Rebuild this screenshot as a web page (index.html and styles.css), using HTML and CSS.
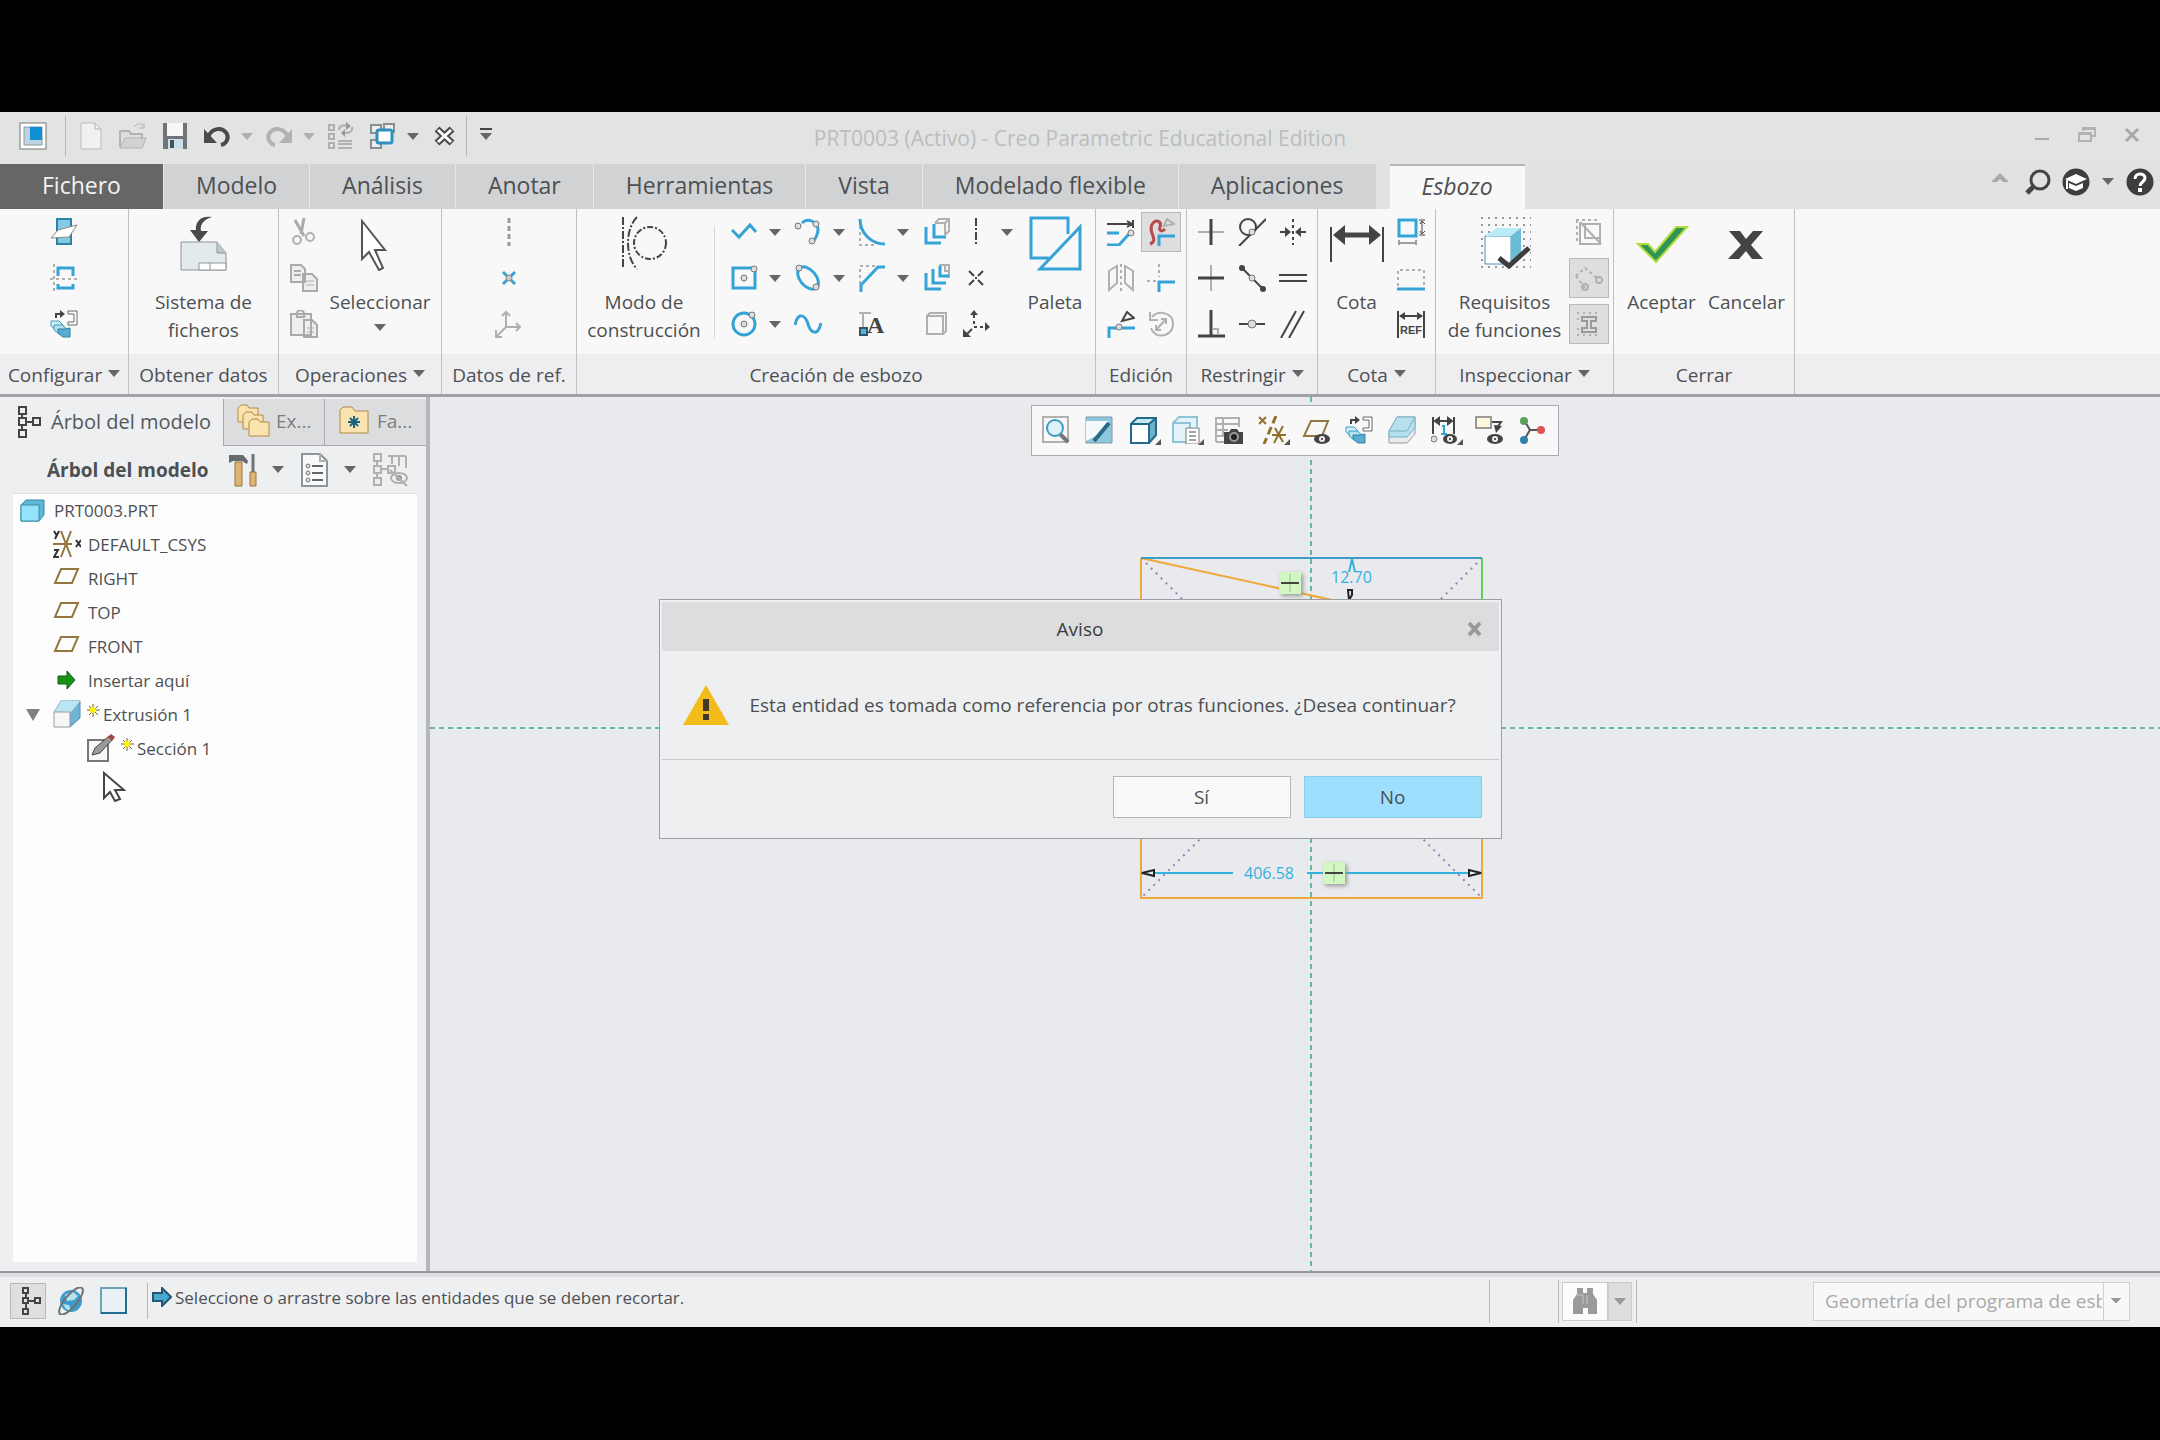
FILE: index.html
```html
<!DOCTYPE html>
<html lang="es">
<head>
    <meta charset="UTF-8">
    <meta name="viewport" content="width=device-width, initial-scale=1.0">
    <title>PRT0003 (Activo) - Creo Parametric Educational Edition</title>
    <link rel="stylesheet" href="styles.css">
</head>
<body>
    <div class="app">
        <header class="titlebar">
            <div class="quick">
                <button class="qbtn logo" aria-label="Creo"><svg viewBox="0 0 28 28"><rect x="1" y="1" width="26" height="26" fill="#fff" stroke="#777"/><path d="M5 5h18v18H5z" fill="#bcd5e0" stroke="#8a9aa2"/><path d="M11 5h12v13H11z" fill="#0f8fd4"/></svg></button>
                <span class="qsep"></span>
                <button class="qbtn" aria-label="Nuevo"><svg viewBox="0 0 28 28"><path d="M4 1h14l6 6v20H4z" fill="#f0f0f0" stroke="#bcbcbc"/><path d="M18 1v6h6" class="gray"/></svg></button>
                <button class="qbtn" aria-label="Abrir"><svg viewBox="0 0 28 28"><path d="M1 25V9h9l2 3h11v4" fill="#ddd" stroke="#b4b4b4" stroke-width="2"/><path d="M1 26l5-10h21l-4 10z" fill="#d2d2d2" stroke="#b4b4b4"/><path d="M15 5c3-4 6-4 9-1M25 1v5h-5" class="gray"/></svg></button>
                <button class="qbtn" aria-label="Guardar"><svg viewBox="0 0 28 28"><path d="M2 1h24v26H2z" fill="#707478"/><path d="M6 1h16v13H6z" fill="#f7f7f7"/><path d="M7 17h15v10H7z" fill="#c9dfe9"/><path d="M9 18h4v8H9z" fill="#45525a"/></svg></button>
                <button class="qbtn" aria-label="Deshacer"><svg viewBox="0 0 28 28"><path d="M5 15C9 6 19 4 24 12c2 5-1 10-6 11" fill="none" stroke="#4a4a4a" stroke-width="4"/><path d="M1 7v14h13z" fill="#4a4a4a"/></svg></button>
                <button class="drop off" aria-label="Lista deshacer"><i class="caret"></i></button>
                <button class="qbtn" aria-label="Rehacer"><svg viewBox="0 0 28 28"><path d="M23 15C19 6 9 4 4 12c-2 5 1 10 6 11" fill="none" stroke="#b2b2b2" stroke-width="4"/><path d="M27 7v14H14z" fill="#b2b2b2"/></svg></button>
                <button class="drop off" aria-label="Lista rehacer"><i class="caret"></i></button>
                <button class="qbtn" aria-label="Regenerar"><svg viewBox="0 0 28 28"><path d="M2 3h5v5H2zM2 12h5v5H2zM2 21h5v5H2zM11 19h14M11 22h14M11 26h14M12 8c0-5 5-5 9-4M25 5c1 5-3 6-8 6" class="gray thick"/><path d="M19 0l5 4-5 4zM18 7v8l-4-4z" fill="#999"/></svg></button>
                <button class="qbtn" aria-label="Ventanas"><svg viewBox="0 0 28 28"><path d="M2 3h10v8H2zM15 2h10v8H15zM2 18h10v8H2z" fill="#eee" stroke="#8b8f92" stroke-width="2"/><rect x="8" y="8" width="15" height="13" rx="2" fill="#fff" stroke="#2f8fbe" stroke-width="3"/></svg></button>
                <button class="drop" aria-label="Lista ventanas"><i class="caret"></i></button>
                <button class="qbtn" aria-label="Cerrar ventana"><svg viewBox="0 0 28 28"><path d="M6 7l15 14M21 7L6 21" stroke="#4a4a4a" stroke-width="7"/><path d="M7 8l13 12M20 8L7 20" stroke="#fff" stroke-width="3"/></svg></button>
                <span class="qsep last"></span>
                <button class="drop more" aria-label="Personalizar"><i class="caret"></i></button>
            </div>
            <h1>PRT0003 (Activo) - Creo Parametric Educational Edition</h1>
            <div class="winbtns">
                <button aria-label="Minimizar"><svg viewBox="0 0 20 20"><path d="M3 14h14" stroke="#aaa" stroke-width="2"/></svg></button>
                <button aria-label="Restaurar"><svg viewBox="0 0 20 20"><path d="M6 6V3h12v8h-4M6 4h12M2 8h12v8H2zM2 9h12" fill="none" stroke="#b2b2b2" stroke-width="2"/></svg></button>
                <button aria-label="Cerrar"><svg viewBox="0 0 20 20"><path d="M4 4l12 12M16 4L4 16" stroke="#a8a8a8" stroke-width="3"/></svg></button>
            </div>
        </header>

        <nav class="tabs">
            <button class="tab file">Fichero</button>
            <button class="tab">Modelo</button>
            <button class="tab">Análisis</button>
            <button class="tab">Anotar</button>
            <button class="tab">Herramientas</button>
            <button class="tab">Vista</button>
            <button class="tab">Modelado flexible</button>
            <button class="tab">Aplicaciones</button>
            <button class="tab active">Esbozo</button>
            <div class="help">
                <button aria-label="Minimizar cinta"><svg viewBox="0 0 28 28"><path d="M5 14l9-9 9 9h-6l-3-3-3 3z" fill="#aaa"/></svg></button>
                <button aria-label="Buscar"><svg viewBox="0 0 28 28"><circle cx="16" cy="12" r="9" fill="none" stroke="#444" stroke-width="3"/><path d="M9 19l-6 6" stroke="#444" stroke-width="5"/></svg></button>
                <button aria-label="Aprendizaje"><svg viewBox="0 0 28 28"><circle cx="14" cy="14" r="13.5" fill="#3d3d3d"/><path d="M3 11l11-5 11 5-11 5zM7 15l7 3 7-3v5l-7 3-7-3z" fill="#fff"/><path d="M5 12v9" stroke="#fff" stroke-width="2"/></svg></button>
                <button class="drop" aria-label="Lista aprendizaje"><i class="caret"></i></button>
                <button aria-label="Ayuda"><svg viewBox="0 0 28 28"><circle cx="14" cy="14" r="13.5" fill="#3d3d3d"/><path d="M9 11c0-7 10-6 10-1 0 4-5 4-5 8" fill="none" stroke="#fff" stroke-width="3"/><path d="M12 20h4v4h-4z" fill="#fff"/></svg></button>
            </div>
        </nav>

        <section class="ribbon">
            <div class="group g-config">
                <div class="tools">
                    <div class="grid c1">
                        <button class="tool" aria-label="Configurar esbozo"><svg viewBox="0 0 28 28"><path d="M7 1h14v25H7z" fill="#86cbe2" stroke="#2a82a6" stroke-width="2"/><path d="M1 20l7-8 19-5-8 12z" fill="#fff" stroke="#888"/></svg></button>
                        <button class="tool" aria-label="Referencias"><svg viewBox="0 0 28 28"><path d="M4 0v28M0 15h27" class="gray dash"/><path d="M8 12V4h15v8M8 20v4h15v-4" class="blue"/></svg></button>
                        <button class="tool" aria-label="Vista de esbozo"><svg viewBox="0 0 28 28"><path d="M6 8V4h6" class="dark"/><path d="M18 1h9v14h-9v-3h6V4h-6z" fill="#fff" stroke="#666"/><path d="M10 0l5 4-5 4z" fill="#444"/><path d="M1 11h8l4 4v5H6l-5-4z" fill="#d5eff9" stroke="#3a9cc4"/><path d="M4 15h8l5 4v5H9l-5-4z" fill="#b5e0f0" stroke="#3a9cc4"/><path d="M8 19h7l5-1v9h-7l-5-4z" fill="#5aabd0" stroke="#2a82a6"/></svg></button>
                    </div>
                </div>
                <button class="caption">Configurar <i class="caret"></i></button>
            </div>
            <div class="group g-data">
                <div class="tools">
                    <button class="big"><svg viewBox="0 0 56 56"><path d="M5 27h36l9 11v17H5z" fill="#e3eaec" stroke="#8f9598"/><path d="M41 27v11h9" fill="#b9c9cc" stroke="#8f9598"/><path d="M23 48h27v7H23zM34 48v7" fill="#fff" stroke="#8f9598"/><path d="M36 2C26 5 24 11 25 16h7l-9 11-9-12h6C19 7 25 0 36 2z" fill="#4a4a4a"/></svg><span>Sistema de ficheros</span></button>
                </div>
                <div class="caption">Obtener datos</div>
            </div>
            <div class="group g-ops">
                <div class="tools">
                    <div class="grid c1">
                        <button class="tool" aria-label="Cortar"><svg viewBox="0 0 28 28"><path d="M5 2l9 16M14 0l-3 16" stroke="#aaa" stroke-width="3"/><circle cx="7" cy="22" r="4" class="gray thick"/><circle cx="20" cy="19" r="4" class="gray thick"/></svg></button>
                        <button class="tool" aria-label="Copiar"><svg viewBox="0 0 28 28"><path d="M1 1h10l4 4v13H1zM4 7h7M4 11h7M13 10h9l5 5v12H13z" fill="#eee" stroke="#aaa" stroke-width="2"/><path d="M16 17h8M16 21h8" class="gray"/></svg></button>
                        <button class="tool" aria-label="Pegar"><svg viewBox="0 0 28 28"><path d="M1 4h20v21H1zM7 4c0-5 7-5 7 0v3H7zM14 10h8l5 5v12H14z" fill="#eee" stroke="#aaa" stroke-width="2"/><path d="M17 18h7M17 22h7" class="gray"/></svg></button>
                    </div>
                    <button class="big"><svg viewBox="0 0 56 56"><path d="M10 6v38l7-7 10 18 4-2-8-18h10z" fill="#fff" stroke="#555" stroke-width="2"/></svg><span>Seleccionar</span><i class="caret"></i></button>
                </div>
                <button class="caption">Operaciones <i class="caret"></i></button>
            </div>
            <div class="group g-ref">
                <div class="tools">
                    <div class="grid c1">
                        <button class="tool" aria-label="Línea de centros"><svg viewBox="0 0 28 28"><path d="M14 0v28" stroke="#999" stroke-width="3" stroke-dasharray="5 3"/></svg></button>
                        <button class="tool" aria-label="Punto"><svg viewBox="0 0 28 28"><path d="M8 8l12 12M20 8L8 20" class="blue"/><circle cx="14" cy="14" r="3" fill="#ccc" stroke="#888"/></svg></button>
                        <button class="tool" aria-label="Sistema de coordenadas"><svg viewBox="0 0 28 28"><path d="M11 2v15h14M11 17l-9 9M7 6l4-4 4 4M21 13l4 4-4 4M1 20v7h6" class="gray thick"/></svg></button>
                    </div>
                </div>
                <div class="caption">Datos de ref.</div>
            </div>
            <div class="group g-sketch">
                <div class="tools">
                    <button class="big wide"><svg viewBox="0 0 56 56"><path d="M7 2v52M21 2C9 14 9 42 21 54" stroke="#444" stroke-width="2" fill="none" stroke-dasharray="8 2 2 2"/><circle cx="34" cy="28" r="16" stroke="#444" stroke-width="2" fill="none" stroke-dasharray="6 2 2 2"/></svg><span>Modo de construcción</span></button>
                    <span class="vline"></span>
                    <div class="grid sketch">
                        <div class="split"><button class="tool" aria-label="Línea"><svg viewBox="0 0 28 28"><path d="M2 12l7 7L20 7l6 7" class="blue"/></svg></button><button class="drop" aria-label="Más líneas"><i class="caret"></i></button></div>
                        <div class="split"><button class="tool" aria-label="Arco"><svg viewBox="0 0 28 28"><path d="M8 5C14-1 24 4 24 12c0 4-3 9-5 12" class="blue"/><circle cx="4" cy="8" r="3" class="dot"/><circle cx="22" cy="6" r="3" class="dot"/><circle cx="18" cy="23" r="3" class="dot"/></svg></button><button class="drop" aria-label="Más arcos"><i class="caret"></i></button></div>
                        <div class="split"><button class="tool" aria-label="Empalme"><svg viewBox="0 0 28 28"><path d="M2 8v19h14" class="gray dash"/><path d="M2 1c0 14 11 25 25 25" class="blue"/></svg></button><button class="drop" aria-label="Más empalmes"><i class="caret"></i></button></div>
                        <button class="tool" aria-label="Desfase"><svg viewBox="0 0 28 28"><path d="M13 5l4-4h10v12l-4 4M13 5h10v12M23 5l4-4" class="gray thick"/><path d="M12 6v13h12M4 9v16h15" class="blue"/></svg></button>
                        <div class="split"><button class="tool" aria-label="Línea de eje"><svg viewBox="0 0 28 28"><path d="M14 0v28" stroke="#444" stroke-width="2" stroke-dasharray="8 2 2 2"/></svg></button><button class="drop" aria-label="Más líneas de eje"><i class="caret"></i></button></div>

                        <div class="split"><button class="tool" aria-label="Rectángulo"><svg viewBox="0 0 28 28"><path d="M3 4h22v20H3z" class="blue"/><circle cx="14" cy="14" r="3" class="dot"/><circle cx="24" cy="5" r="3" class="dot"/></svg></button><button class="drop" aria-label="Más rectángulos"><i class="caret"></i></button></div>
                        <div class="split"><button class="tool" aria-label="Elipse"><svg viewBox="0 0 28 28"><ellipse cx="14" cy="14" rx="13" ry="8" transform="rotate(50 14 14)" class="blue"/><circle cx="5" cy="4" r="3" class="dot"/><circle cx="22" cy="23" r="3" class="dot"/></svg></button><button class="drop" aria-label="Más elipses"><i class="caret"></i></button></div>
                        <div class="split"><button class="tool" aria-label="Chaflán"><svg viewBox="0 0 28 28"><path d="M2 20V2h16" class="gray dash"/><path d="M3 28v-7L20 3h7" class="blue"/></svg></button><button class="drop" aria-label="Más chaflanes"><i class="caret"></i></button></div>
                        <button class="tool" aria-label="Engrosar"><svg viewBox="0 0 28 28"><path d="M17 1h10v13M23 1v6h4" class="gray thick"/><path d="M11 5v14h13M4 9v16h15M18 2v10h9" class="blue"/></svg></button>
                        <button class="tool" aria-label="Punto de esbozo"><svg viewBox="0 0 28 28"><path d="M7 7l5 5M16 16l5 5M21 7l-5 5M12 16l-5 5M13 14h2" class="dark"/></svg></button>

                        <div class="split"><button class="tool" aria-label="Círculo"><svg viewBox="0 0 28 28"><circle cx="14" cy="14" r="11" class="blue"/><circle cx="14" cy="14" r="3" class="dot"/><circle cx="22" cy="5" r="3" class="dot"/></svg></button><button class="drop" aria-label="Más círculos"><i class="caret"></i></button></div>
                        <button class="tool" aria-label="Spline"><svg viewBox="0 0 28 28"><path d="M1 15C4 2 11 4 14 14s10 12 13-1" class="blue"/></svg></button>
                        <button class="tool" aria-label="Texto"><svg viewBox="0 0 28 28"><path d="M5 24V4M1 3h12" class="gray thick"/><text x="9" y="23" class="glyph">A</text><path d="M2 18h7v7H2z" fill="#52b4da" stroke="#31586a" stroke-width="2"/></svg></button>
                        <button class="tool" aria-label="Proyectar"><svg viewBox="0 0 28 28"><path d="M5 6h16v18H5zM5 6l3-3h16v18l-3 3" class="gray thick"/></svg></button>
                        <button class="tool" aria-label="Sistema de coordenadas de esbozo"><svg viewBox="0 0 28 28"><path d="M12 5v12h12" class="dark dash"/><path d="M10 19l-6 6" class="dark"/><path d="M8 5l4-5 4 5zM23 12l5 5-5 4zM1 19v8h8z" fill="#444"/></svg></button>
                    </div>
                    <button class="big"><svg viewBox="0 0 56 56"><path d="M22 43H4V3h37v16M53 12v42H13z" fill="none" stroke="#35a3d6" stroke-width="3"/></svg><span>Paleta</span></button>
                </div>
                <div class="caption">Creación de esbozo</div>
            </div>
            <div class="group g-edit">
                <div class="tools">
                    <div class="grid c2">
                        <button class="tool" aria-label="Modificar"><svg viewBox="0 0 28 28"><path d="M0 6h26M26 2v8M20 3l5 3-5 3" class="dark"/><path d="M0 15h12M0 27h12l10-11" class="blue"/><circle cx="24" cy="15" r="3" class="dot"/></svg></button>
                        <button class="tool on" aria-label="Suprimir segmento"><svg viewBox="0 0 28 28"><path d="M3 26c10-4-4-13 3-21 4-4 9-1 7 4-1 3 1 6 5 2" fill="none" stroke="#b8494c" stroke-width="3"/><path d="M12 28v-10h16" class="blue"/><path d="M17 8l3-7 7 5z" class="gray thick"/></svg></button>
                        <button class="tool" aria-label="Simetría"><svg viewBox="0 0 28 28"><path d="M2 7l8-5v17l-8 7zM26 7l-8-5v17l8 7z" class="gray thick"/><path d="M14 0v28" class="gray dash"/></svg></button>
                        <button class="tool" aria-label="Esquina"><svg viewBox="0 0 28 28"><path d="M12 0v13M0 17h10" class="gray dash"/><path d="M12 28V18h16" class="blue"/></svg></button>
                        <button class="tool" aria-label="Dividir"><svg viewBox="0 0 28 28"><path d="M2 28V18h26" class="blue"/><circle cx="12" cy="17" r="3" class="dot"/><path d="M15 11L20 2l7 6z" class="dark"/></svg></button>
                        <button class="tool" aria-label="Girar"><svg viewBox="0 0 28 28"><path d="M5 7c6-7 21-5 21 7 0 13-18 16-22 4M3 2v8h8M9 20L19 9M9 15v5h5M14 9h5v5" class="gray thick"/></svg></button>
                    </div>
                </div>
                <div class="caption">Edición</div>
            </div>
            <div class="group g-cons">
                <div class="tools">
                    <div class="grid c3">
                        <button class="tool" aria-label="Vertical"><svg viewBox="0 0 28 28"><path d="M1 14h26" class="gray thick"/><path d="M14 1v26" class="dark bold"/></svg></button>
                        <button class="tool" aria-label="Tangente"><svg viewBox="0 0 28 28"><circle cx="10" cy="9" r="8" class="dark"/><path d="M1 28L28 1" class="dark"/><circle cx="14" cy="14" r="3" class="dot"/></svg></button>
                        <button class="tool" aria-label="Simétrico"><svg viewBox="0 0 28 28"><path d="M14 1v26" class="dark dash"/><path d="M1 14h9M27 14h-9" class="dark"/><path d="M6 9l6 5-6 5zM22 9l-6 5 6 5z" fill="#444"/></svg></button>
                        <button class="tool" aria-label="Horizontal"><svg viewBox="0 0 28 28"><path d="M14 1v26" class="gray thick"/><path d="M1 14h26" class="dark bold"/></svg></button>
                        <button class="tool" aria-label="Punto medio"><svg viewBox="0 0 28 28"><path d="M4 4l20 20" class="dark"/><circle cx="4" cy="4" r="3" fill="#444"/><circle cx="25" cy="25" r="3" fill="#444"/><circle cx="14" cy="14" r="3" class="dot"/></svg></button>
                        <button class="tool" aria-label="Igual"><svg viewBox="0 0 28 28"><path d="M0 11h28M0 17h28" class="dark"/></svg></button>
                        <button class="tool" aria-label="Perpendicular"><svg viewBox="0 0 28 28"><path d="M14 0v26M1 26h27" class="dark bold"/><path d="M15 19h6v6" class="gray thick"/></svg></button>
                        <button class="tool" aria-label="Coincidente"><svg viewBox="0 0 28 28"><path d="M1 14h26" class="dark"/><circle cx="14" cy="14" r="4" class="dot"/></svg></button>
                        <button class="tool" aria-label="Paralelo"><svg viewBox="0 0 28 28"><path d="M2 28L17 1M10 28L25 1" class="dark"/></svg></button>
                    </div>
                </div>
                <button class="caption">Restringir <i class="caret"></i></button>
            </div>
            <div class="group g-dim">
                <div class="tools">
                    <button class="big"><svg viewBox="0 0 56 56"><path d="M2 12v35M54 12v35" stroke="#444" stroke-width="2"/><path d="M10 20h36" stroke="#444" stroke-width="5"/><path d="M4 20l12-10v20zM52 20L40 10v20z" fill="#444"/></svg><span>Cota</span></button>
                    <div class="grid c1">
                        <button class="tool" aria-label="Perímetro"><svg viewBox="0 0 28 28"><path d="M2 2h17v16H2z" class="blue"/><path d="M22 2h6M25 3v13M22 17h6M2 22v5M3 25h15M19 22v5M23 6l2-3 3 3M23 13l2 3 3-3" class="dark thin"/></svg></button>
                        <button class="tool" aria-label="Línea base"><svg viewBox="0 0 28 28"><path d="M1 22V6h26v16" class="gray dash"/><path d="M0 25h28" class="blue"/></svg></button>
                        <button class="tool" aria-label="Referencia"><svg viewBox="0 0 28 28"><path d="M1 1v27M27 1v27M3 6h22" class="dark"/><path d="M2 6l6-4v8zM26 6l-6-4v8z" fill="#444"/><text x="3" y="24" class="ref">REF</text></svg></button>
                    </div>
                </div>
                <button class="caption">Cota <i class="caret"></i></button>
            </div>
            <div class="group g-insp">
                <div class="tools">
                    <button class="big"><svg viewBox="0 0 56 56"><path d="M4 3h50M4 10h50M4 17h50M4 24h50M4 31h50M4 38h50M4 45h50M4 52h50" stroke="#999" stroke-width="2" stroke-dasharray="2 5"/><path d="M8 21h26v28H8z" fill="#fff" stroke="#4a93ad"/><path d="M8 21l12-8h24l-10 8z" fill="#b8ecf6"/><path d="M34 21l10-8v24L34 49z" fill="#6abbd6"/><path d="M22 43l10 8 20-18" fill="none" stroke="#3d3d3d" stroke-width="5"/></svg><span>Requisitos de&nbsp;funciones</span></button>
                    <div class="grid c1">
                        <button class="tool" aria-label="Geometría solapada"><svg viewBox="0 0 28 28"><path d="M1 2h24M2 2v24" class="gray dash"/><path d="M5 6h20v20H5zM10 6v14h15M5 4l21 22" class="gray thick"/></svg></button>
                        <button class="tool on" aria-label="Extremos abiertos"><svg viewBox="0 0 28 28"><path d="M1 12L10 4l12 10M1 12l9 12" class="gray dash"/><circle cx="10" cy="23" r="3" class="gray thick"/><circle cx="24" cy="16" r="3" class="gray thick"/></svg></button>
                        <button class="tool on" aria-label="Bucles cerrados"><svg viewBox="0 0 28 28"><path d="M2 3h24M2 25h24M2 9h24M2 19h24" class="gray dots"/><path d="M7 7h14v4h-5v7h5v4H7v-4h5v-7H7z" fill="#dcdee0" stroke="#999" stroke-width="2"/></svg></button>
                    </div>
                </div>
                <button class="caption">Inspeccionar <i class="caret"></i></button>
            </div>
            <div class="group g-close">
                <div class="tools">
                    <button class="big"><svg viewBox="0 0 56 56"><path d="M4 29h10l7 8 21-25h11L22 47z" fill="#2f9455" stroke="#b3dc3c" stroke-width="2"/></svg><span>Aceptar</span></button>
                    <button class="big"><svg viewBox="0 0 56 56"><path d="M10 16h11l6 8 7-8h10L32 30l12 14H33l-6-8-7 8H9l13-14z" fill="#444"/></svg><span>Cancelar</span></button>
                </div>
                <div class="caption">Cerrar</div>
            </div>
            <div class="group rest"><div class="tools"></div><div class="caption"></div></div>
        </section>

        <main class="work">
            <aside class="side">
                <div class="side-tabs">
                    <button class="side-tab current"><svg viewBox="0 0 28 34"><path d="M3 2h7v7H3zM3 13h7v7H3zM3 25h7v7H3zM17 13h7v7h-7zM6 9v4M6 20v5M10 17h7" class="dark"/></svg>Árbol del modelo</button>
                    <button class="side-tab"><svg viewBox="0 0 34 34"><g fill="#fbe3b0" stroke="#b08a45"><path d="M2 18V4l3-3h6l2 3h9v14z"/><path d="M7 25V11l3-3h6l2 3h9v14z"/><path d="M13 32V18l3-3h6l2 3h9v14z"/></g></svg>Ex...</button>
                    <button class="side-tab"><svg viewBox="0 0 34 34"><path d="M3 29V6l3-3h9l3 4h13v22z" fill="#fbe3b0" stroke="#b08a45"/><path d="M17 12v12M11 18h12M13 14l8 8M21 14l-8 8" stroke="#19617e" stroke-width="2"/></svg>Fa...</button>
                </div>
                <div class="side-head">
                    <h2>Árbol del modelo</h2>
                    <button class="hbtn" aria-label="Configuración"><svg viewBox="0 0 30 34"><path d="M1 2h14l5 6-1 3-5-3H5l-4 2z" fill="#666b70"/><path d="M7 9h7v24H7z" fill="#dcb573" stroke="#9b743c"/><path d="M25 1v18" stroke="#6c747c" stroke-width="3"/><path d="M22 19h6v14h-6z" fill="#dcb573" stroke="#9b743c"/></svg></button>
                    <button class="drop" aria-label="Más configuración"><i class="caret"></i></button>
                    <button class="hbtn" aria-label="Mostrar"><svg viewBox="0 0 30 34"><path d="M2 1h18l7 7v25H2z" fill="#f7f9fa" stroke="#8d9599" stroke-width="2"/><path d="M20 1v7h7" class="gray thick"/><path d="M12 13h11M12 20h11M12 27h11" stroke="#666" stroke-width="2"/><circle cx="8" cy="13" r="2" class="dot"/><circle cx="8" cy="20" r="2" class="dot"/><circle cx="8" cy="27" r="2" class="dot"/></svg></button>
                    <button class="drop" aria-label="Más opciones"><i class="caret"></i></button>
                    <button class="hbtn hide" aria-label="Ocultar"><svg viewBox="0 0 36 34"><path d="M2 1h7v7H2zM2 13h7v7H2zM2 25h7v7H2zM16 13h7v7h-7zM5 8v5M5 20v5M9 16h7M16 3h18M20 3v8M27 3v10M34 3v12" class="gray thick"/><ellipse cx="27" cy="25" rx="8" ry="5" class="gray thick"/><circle cx="27" cy="25" r="3" fill="#999"/><path d="M18 17l17 16" class="gray thick"/></svg></button>
                </div>
                <ul class="tree">
                    <li class="root"><svg viewBox="0 0 28 28"><path d="M2 9l5-5h18v15l-5 6H2z" fill="#5fb6d8" stroke="#3189ab"/><path d="M2 9h18v16H2z" fill="#93e3fb" stroke="#3b8aab"/></svg>PRT0003.PRT</li>
                    <li><svg viewBox="0 0 28 28"><path d="M8 1l10 26M18 1L8 27M0 14h19" stroke="#93753c" stroke-width="2"/><path d="M1 1l3 5M6 1L2 9M23 10l5 7M28 10l-5 7M1 20h4l-4 7h5" fill="none" stroke="#333" stroke-width="2"/></svg>DEFAULT_CSYS</li>
                    <li><svg viewBox="0 0 28 28"><path d="M8 5h17l-6 14H2z" class="plane"/></svg>RIGHT</li>
                    <li><svg viewBox="0 0 28 28"><path d="M8 5h17l-6 14H2z" class="plane"/></svg>TOP</li>
                    <li><svg viewBox="0 0 28 28"><path d="M8 5h17l-6 14H2z" class="plane"/></svg>FRONT</li>
                    <li><svg viewBox="0 0 28 28"><path d="M5 10h9V5l8 9-8 9v-5H5z" fill="#169316" stroke="#0c5e0c"/></svg>Insertar aquí</li>
                    <li class="parent"><button class="twist" aria-label="Contraer"><i class="caret"></i></button><svg viewBox="0 0 28 28"><path d="M1 12L8 1h19v17l-10 9z" fill="#6fb4d2" stroke="#4d90ae"/><path d="M8 1h19l-9 11H1z" fill="#bce5f3"/><path d="M1 12h16v15H1z" fill="#f6f6f6" stroke="#999"/></svg><svg class="star" viewBox="0 0 13 13"><path d="M6 0v13M0 6h13M2 2l9 9M11 2l-9 9" stroke="#6f6410"/><circle cx="6" cy="6" r="3" fill="#fdf200"/></svg>Extrusión 1</li>
                    <li class="child"><svg viewBox="0 0 28 28"><path d="M1 6h20v21H1z" fill="#f8f8f8" stroke="#777" stroke-width="2"/><path d="M5 21l3-7L22 2l4 3-13 14z" fill="#9b9b9b" stroke="#444"/><path d="M21 3l3-3 4 3-3 4z" fill="#a54444"/></svg><svg class="star" viewBox="0 0 13 13"><path d="M6 0v13M0 6h13M2 2l9 9M11 2l-9 9" stroke="#6f6410"/><circle cx="6" cy="6" r="3" fill="#fdf200"/></svg>Sección 1</li>
                </ul>
            </aside>

            <section class="canvas">
                <svg class="drawing" viewBox="0 0 1730 874">
                    <path d="M881 0v874M0 331h1730" stroke="#62b8a4" stroke-width="2" stroke-dasharray="5 4" fill="none"/>
                    <path d="M711 161l341 340M1052 161L711 501" stroke="#9a7fb8" stroke-width="2" stroke-dasharray="2 5"/>
                    <path d="M711 161v340h341V300M711 161l341 75" stroke="#efa93a" stroke-width="2" fill="none"/>
                    <path d="M1052 161v139" stroke="#62cf52" stroke-width="2"/>
                    <path d="M711 161h341" stroke="#3f9cc4" stroke-width="2"/>
                    <path d="M711 476h92M877 476h175M922 162l-3 13M922 162l3 13" stroke="#35b1dd" stroke-width="2"/>
                    <path d="M712 476l12-3v6zM1051 476l-12-3v6zM918 193h4v5l-3 5z" fill="#eee" stroke="#222" stroke-width="2"/>
                    <text x="901" y="186" class="dimtext">12.70</text>
                    <text x="814" y="482" class="dimtext">406.58</text>
                    <g class="mark">
                        <rect x="849" y="175" width="22" height="22"/>
                        <rect x="893" y="465" width="22" height="22"/>
                    </g>
                    <path d="M860 177v18M904 467v18" stroke="#8fc28a"/>
                    <path d="M851 186h18M895 476h18" stroke="#444" stroke-width="2"/>
                </svg>
                <div class="viewbar">
                    <button aria-label="Reajustar"><svg viewBox="0 0 28 28"><path d="M1 1h25v25H1z" class="gray thick"/><path d="M18 18l8 8" stroke="#777" stroke-width="4"/><circle cx="13" cy="12" r="8" fill="#dff2fa" stroke="#3f9cc4" stroke-width="2"/></svg></button>
                    <button aria-label="Repintar"><svg viewBox="0 0 28 28"><path d="M1 1h26v26H1z" fill="#8fc7dd" stroke="#7e9aa5"/><path d="M1 5h23L13 19 1 25z" fill="#f4fafc"/><path d="M24 7L9 25" stroke="#276b88" stroke-width="4"/></svg></button>
                    <button class="fly" aria-label="Estilo de visualización"><svg viewBox="0 0 28 28"><path d="M20 8l7-6v17l-7 8z" fill="#6fb0ca"/><path d="M2 8l6-6h19l-7 6z" fill="#c6e8f3"/><path d="M2 8h18v19H2zM2 8l6-6h19v17l-7 8M20 8l7-6" fill="none" stroke="#23698a" stroke-width="2"/><path d="M3 9h16v17H3z" fill="#fff"/></svg></button>
                    <button class="fly" aria-label="Orientaciones"><svg viewBox="0 0 28 28"><path d="M1 7l6-6h18v10M1 7h17v19H1z" fill="#e2f4fa" stroke="#8fc3d6" stroke-width="2"/><path d="M14 12h13v16H14z" fill="#fff" stroke="#777"/><path d="M17 16h7M17 20h7M17 24h7" class="dark thin"/></svg></button>
                    <button aria-label="Gestor de vistas"><svg viewBox="0 0 28 28"><path d="M1 2h23M1 8h23M1 14h12M1 20h8M1 26h8M1 1v25M8 2v18M24 1v10" class="gray thick"/><path d="M9 16h5l2-3h6l2 3h4v12H9z" fill="#444"/><circle cx="19" cy="21" r="4" fill="#222" stroke="#999" stroke-width="2"/></svg></button>
                    <button class="fly" aria-label="Filtros de referencia"><svg viewBox="0 0 28 28"><path d="M1 1l7 7M8 1L1 8M14 19h14M17 12l8 14M25 10l-9 17" stroke="#93712d" stroke-width="2"/><path d="M18 0L6 28" stroke="#93712d" stroke-width="3" stroke-dasharray="8 4"/></svg></button>
                    <button aria-label="Mostrar planos"><svg viewBox="0 0 28 28"><path d="M9 5h17l-6 15H2z" class="plane"/><ellipse cx="20" cy="23" rx="8" ry="5" fill="#444"/><circle cx="20" cy="23" r="3" fill="#eee"/><circle cx="20" cy="23" r="1" fill="#222"/></svg></button>
                    <button aria-label="Vista de esbozo"><svg viewBox="0 0 28 28"><path d="M6 8V4h6" class="dark"/><path d="M18 1h9v14h-9v-3h6V4h-6z" fill="#fff" stroke="#666"/><path d="M10 0l5 4-5 4z" fill="#444"/><path d="M1 11h8l4 4v5H6l-5-4z" fill="#d5eff9" stroke="#3a9cc4"/><path d="M4 15h8l5 4v5H9l-5-4z" fill="#b5e0f0" stroke="#3a9cc4"/><path d="M8 19h7l5-1v9h-7l-5-4z" fill="#5aabd0" stroke="#2a82a6"/></svg></button>
                    <button aria-label="Recortar modelo"><svg viewBox="0 0 28 28"><path d="M1 15L9 1h18v17l-8 9H1z" fill="#e8eced" stroke="#999"/><path d="M1 15L9 1h18v11l-8 9H1z" fill="#b5e0ec" stroke="#76b3c7"/><path d="M1 15h18l8-14" stroke="#76b3c7"/></svg></button>
                    <button class="fly" aria-label="Mostrar cotas"><svg viewBox="0 0 28 28"><path d="M2 1v17M23 1v17M4 5h17M4 5l4-3v6zM21 5l-4-3v6z" class="dark"/><path d="M11 10h2v8M10 18h6" stroke="#35a3d6" stroke-width="2"/><circle cx="3" cy="23" r="3" class="dot"/><ellipse cx="19" cy="23" rx="7" ry="5" fill="#444"/><circle cx="19" cy="23" r="3" fill="#eee"/><circle cx="19" cy="23" r="1" fill="#222"/></svg></button>
                    <button aria-label="Anotaciones"><svg viewBox="0 0 28 28"><path d="M1 1h15v11H1z" fill="#fdf8dc" stroke="#999" stroke-width="2"/><path d="M17 6h9l-4 6" class="dark"/><path d="M19 9l8 1-6 7z" fill="#444"/><ellipse cx="20" cy="23" rx="8" ry="5" fill="#444"/><circle cx="20" cy="23" r="3" fill="#eee"/><circle cx="20" cy="23" r="1" fill="#222"/></svg></button>
                    <button aria-label="Centro de giro"><svg viewBox="0 0 28 28"><path d="M6 4l6 10h12M12 14L6 24" stroke="#555" stroke-width="2"/><circle cx="6" cy="5" r="4" fill="#5c9f58"/><circle cx="23" cy="14" r="4" fill="#df5557"/><circle cx="6" cy="24" r="4" fill="#3580ab"/></svg></button>
                </div>
            </section>
        </main>

        <footer class="status">
            <button class="sbtn on" aria-label="Árbol"><svg viewBox="0 0 28 28"><path d="M9 1h5v5H9zM9 11h5v5H9zM9 22h5v5H9zM21 11h5v5h-5zM12 6v5M12 16v6M14 14h7" class="dark"/></svg></button>
            <button class="sbtn" aria-label="Explorador"><svg viewBox="0 0 28 28"><circle cx="14" cy="14" r="11" fill="#3c9dcc"/><path d="M8 8l7-4 6 5-4 4-7 1zM6 17l6 1 2 6-5-2z" fill="#b9e2f1"/><ellipse cx="14" cy="14" rx="17" ry="6" transform="rotate(-50 14 14)" fill="none" stroke="#6d7275" stroke-width="2"/></svg></button>
            <button class="sbtn" aria-label="Pantalla completa"><svg viewBox="0 0 28 28"><path d="M1 1h25v25H1z" fill="#eaf1f4" stroke="#6fa3b8" stroke-width="2"/><path d="M1 26h25V1" stroke="#236c8d" stroke-width="2"/></svg></button>
            <p class="message"><svg viewBox="0 0 20 20"><path d="M1 6h9V1l9 9-9 9v-5H1z" fill="#49a9d3" stroke="#24576f" stroke-width="2"/></svg>Seleccione o arrastre sobre las entidades que se deben recortar.</p>
            <div class="find">
                <button aria-label="Buscar"><svg viewBox="0 0 28 28"><path d="M6 1h6v5h4V1h6v6l4 6v14h-9v-6h-5v6H2V13l4-6z" fill="#9a9a9a"/><path d="M6 8h6v9M16 8v9" stroke="#c4c4c4"/></svg></button>
                <button class="find-more" aria-label="Más filtros"><i class="caret"></i></button>
            </div>
            <select class="filter" aria-label="Filtro de selección" disabled>
                <option>Geometría del programa de esbozo</option>
            </select>
        </footer>
    </div>

    <div class="overlay">
        <div class="dialog" role="dialog" aria-labelledby="dlg-title">
            <div class="dlg-head">
                <h2 id="dlg-title">Aviso</h2>
                <button class="dlg-close" aria-label="Cerrar"><svg viewBox="0 0 16 16"><path d="M2 2l11 12M13 2L2 14" stroke="#999" stroke-width="4"/></svg></button>
            </div>
            <div class="dlg-body">
                <svg viewBox="0 0 46 42"><path d="M23 1l23 40H0z" fill="#f3bc1b"/><path d="M20 15h6v12h-6zM20 30h6v6h-6z" fill="#43392a"/></svg>
                <p>Esta entidad es tomada como referencia por otras funciones. ¿Desea continuar?</p>
            </div>
            <div class="dlg-foot">
                <button>Sí</button>
                <button class="primary">No</button>
            </div>
        </div>
    </div>

    <svg class="cursor" viewBox="0 0 24 32"><path d="M2 2v25l6-6 5 9 5-2-5-9h9z" fill="#fff" stroke="#444" stroke-width="2"/></svg>
</body>
</html>
```
FILE: styles.css
```css
* {
    box-sizing: border-box;
}
body {
    margin: 0;
    padding: 112px 0 113px;
    height: 100vh;
    background-color: #000;
    color: #4d5053;
    font-family: "Open Sans", "Noto Sans", sans-serif;
    font-size: 19px;
}
button {
    margin: 0;
    padding: 0;
    border: 0;
    background: none;
    color: inherit;
    font: inherit;
}
h1, h2, p, ul {
    margin: 0;
    padding: 0;
}
svg {
    display: block;
    flex: none;
    fill: none;
}
.app {
    display: flex;
    flex-direction: column;
    height: 100%;
    background-color: #edeff1;
}

/* icon strokes */
.blue { fill: none; stroke: #35a3d6; stroke-width: 3; }
.dark { fill: none; stroke: #444; stroke-width: 2; }
.gray { fill: none; stroke: #b0b0b0; stroke-width: 1; }
.thick { stroke-width: 2; }
.bold { stroke-width: 3; }
.thin { stroke-width: 1; }
.dash { stroke-dasharray: 3 3; stroke-width: 2; }
.dots { stroke-dasharray: 2 4; stroke-width: 2; }
.dot { fill: #ddd; stroke: #777; }
.plane { fill: none; stroke: #94763f; stroke-width: 2; }
.glyph { fill: #444; font: bold 24px "Liberation Serif", serif; }
.ref { fill: #444; font: bold 11px "Liberation Sans", sans-serif; }

.caret {
    display: inline-block;
    border: 6px solid transparent;
    border-top: 7px solid #666;
    border-bottom: 0;
}
.drop {
    display: flex;
    align-items: center;
    justify-content: center;
    width: 22px;
}
.off .caret {
    border-top-color: #b0b0b0;
}

/* title bar */
.titlebar {
    display: grid;
    grid-template-columns: 1fr auto 1fr;
    height: 52px;
    background-color: #e2e3e3;
}
.titlebar h1 {
    font-size: 21px;
    font-weight: normal;
    line-height: 52px;
    color: #bbbdbe;
}
.quick {
    display: flex;
    align-items: center;
    padding: 0 0 4px 19px;
}
.qbtn {
    margin: 0 7px;
}
.qbtn.logo {
    margin: 0;
}
.qbtn svg {
    width: 28px;
    height: 28px;
}
.qbtn + .drop {
    margin-left: -2px;
}
.qsep {
    width: 1px;
    height: 40px;
    margin: 0 4px 0 18px;
    background-color: #b4b6b7;
}
.qsep.last {
    margin: 0 8px 0 0;
}
.more .caret {
    position: relative;
}
.more .caret::before {
    content: "";
    position: absolute;
    left: -6px;
    top: -12px;
    width: 12px;
    height: 2px;
    background-color: #444;
}
.winbtns {
    display: flex;
    align-items: center;
    justify-content: flex-end;
    gap: 25px;
    padding: 0 18px 6px 0;
}
.winbtns svg {
    width: 20px;
    height: 20px;
}

/* ribbon tabs */
.tabs {
    display: flex;
    height: 45px;
    background-color: #e2e2e3;
    font-size: 23px;
}
.tab {
    padding: 0 32px 3px;
    border-left: 1px solid #e6e7e8;
    background-color: #d0d2d4;
}
.tab.file {
    padding: 0 42px 3px;
    border: 0;
    background-color: #666;
    color: #f2f2f2;
}
.tab.active {
    margin-left: 14px;
    border: 0;
    border-top: 2px solid #b2b4b6;
    background-color: #f8f8f8;
    font-style: italic;
}
.help {
    display: flex;
    align-items: center;
    gap: 10px;
    margin-left: auto;
    padding: 0 6px 10px 0;
}
.help svg {
    width: 28px;
    height: 28px;
}
.help .drop {
    width: 16px;
}

/* ribbon */
.ribbon {
    display: flex;
    height: 188px;
    border-bottom: 3px solid #a0a2a5;
    background-color: #f8f8f8;
}
.group {
    display: flex;
    flex-direction: column;
    flex: none;
    border-right: 1px solid #bfc1c2;
}
.group.rest {
    flex: 1;
    border: 0;
}
.g-config { width: 129px; }
.g-data { width: 150px; }
.g-ops { width: 163px; }
.g-ref { width: 135px; }
.g-sketch { width: 519px; }
.g-edit { width: 91px; }
.g-cons { width: 131px; }
.g-dim { width: 118px; }
.g-insp { width: 178px; }
.g-close { width: 181px; }
.tools {
    display: flex;
    flex: 1;
    justify-content: center;
    padding-top: 3px;
}
.caption {
    height: 40px;
    padding-top: 2px;
    background-color: #eeeef0;
    line-height: 38px;
    text-align: center;
    white-space: nowrap;
}
.caption .caret {
    margin: 0 0 5px 1px;
}
.grid {
    display: grid;
    gap: 6px 0;
    align-content: start;
    grid-auto-rows: 40px;
}
.c1 { grid-template-columns: 40px; }
.c2 { grid-template-columns: 40px 40px; }
.c3 { grid-template-columns: 41px 41px 41px; }
.sketch { grid-template-columns: 64px 64px 64px 40px 64px; }
.split {
    display: flex;
}
.tool {
    display: flex;
    align-items: center;
    justify-content: center;
    width: 40px;
    height: 40px;
}
.tool.on {
    border: 1px solid #b7b9bb;
    background-color: #dcdee0;
}
.tool svg {
    width: 28px;
    height: 28px;
}
.big {
    display: flex;
    flex-direction: column;
    align-items: center;
    width: 112px;
    padding-top: 3px;
    line-height: 28px;
}
.big svg {
    width: 56px;
    height: 56px;
    margin-bottom: 17px;
}
.big .caret {
    margin-top: 8px;
}
.wide {
    width: 124px;
}
.vline {
    width: 1px;
    height: 112px;
    margin: 14px 9px 0 8px;
    background-color: #d6d8d9;
}
.sketch + .big {
    width: 70px;
}
.g-dim .big {
    width: 68px;
}
.g-insp .big {
    width: 128px;
}
.g-close .big {
    width: 85px;
}

/* work area */
.work {
    display: flex;
    flex: 1;
    min-height: 0;
}
.side {
    display: flex;
    flex-direction: column;
    width: 430px;
    padding: 2px 0 9px;
    border-right: 4px solid #b5b7ba;
}
.side-tabs {
    display: grid;
    grid-template-columns: 223px 101px 1fr;
    height: 47px;
}
.side-tab {
    display: flex;
    align-items: center;
    gap: 6px;
    padding: 0 0 2px 12px;
    border: 1px solid #a9abae;
    border-top: 0;
    border-right: 0;
    background-color: #dcdddf;
    color: #7b7d7f;
}
.side-tab.current {
    gap: 7px;
    padding-left: 16px;
    border: 0;
    background: none;
    color: #55585b;
    font-size: 20px;
}
.side-tab svg {
    width: 34px;
    height: 34px;
}
.side-tab.current svg {
    width: 28px;
}
.side-head {
    display: flex;
    align-items: center;
    height: 47px;
    padding-left: 47px;
}
.side-head h2 {
    margin-right: 20px;
    font-size: 19px;
}
.hbtn svg {
    width: 30px;
    height: 34px;
}
.side-head .drop {
    margin: 0 11px 0 9px;
}
.hbtn.hide svg {
    width: 36px;
}
.tree {
    flex: 1;
    margin: 0 9px 0 13px;
    border-top: 1px solid #dcdfe1;
    background-color: #fdfdfd;
    font-size: 17px;
    list-style: none;
}
.tree li {
    display: flex;
    align-items: center;
    height: 34px;
    padding: 0 0 2px 40px;
}
.tree li.root {
    padding-left: 6px;
}
.tree li.child {
    padding-left: 74px;
}
.tree li.parent {
    padding-left: 13px;
}
.tree svg {
    width: 28px;
    height: 28px;
    margin-right: 7px;
}
.tree svg.star {
    width: 13px;
    height: 13px;
    margin: 0 3px 8px -1px;
}
.twist {
    width: 14px;
    margin-right: 13px;
}
.twist .caret {
    border-width: 7px;
    border-top: 12px solid #808080;
    border-bottom: 0;
}
.canvas {
    position: relative;
    flex: 1;
    background-color: #e8eaed;
}
.drawing {
    width: 100%;
    height: 100%;
}
.dimtext {
    fill: #35b1dd;
    font-size: 16px;
}
.mark {
    fill: #d3f7c3;
    filter: drop-shadow(2px 2px 2px #999);
}
.viewbar {
    position: absolute;
    top: 8px;
    left: 50%;
    display: flex;
    justify-content: space-between;
    width: 528px;
    height: 51px;
    margin-left: -264px;
    padding: 0 12px 2px 10px;
    border: 1px solid #a9abad;
    background-color: #f8f8f8;
}
.viewbar button {
    position: relative;
    display: flex;
    align-items: center;
}
.viewbar svg {
    width: 28px;
    height: 28px;
}
.fly::after {
    content: "";
    position: absolute;
    right: -4px;
    bottom: 8px;
    border-left: 6px solid transparent;
    border-bottom: 6px solid #555;
}

/* status bar */
.status {
    display: flex;
    align-items: center;
    height: 56px;
    padding: 4px 30px 2px 10px;
    border-top: 2px solid #97999c;
    background: linear-gradient(#dddfe1 4px, #edeff1 4px);
}
.sbtn {
    display: flex;
    align-items: center;
    justify-content: center;
    width: 36px;
    height: 36px;
    margin-right: 7px;
}
.sbtn.on {
    border: 1px solid #b7b9bb;
    background-color: #dddfe1;
}
.sbtn svg {
    width: 28px;
    height: 28px;
}
.message {
    display: flex;
    flex: 1;
    align-items: center;
    height: 36px;
    margin-left: 8px;
    padding: 0 0 8px 4px;
    border-left: 1px solid #b7b9bb;
    font-size: 17px;
}
.message svg {
    width: 20px;
    height: 20px;
    margin-right: 3px;
}
.find {
    display: flex;
    height: 43px;
    padding: 2px 4px;
    margin-right: 176px;
    border: 1px solid #b7b9bb;
    border-width: 0 1px;
}
.find::before {
    content: "";
    width: 1px;
    margin: -2px 72px -2px -74px;
    background-color: #b7b9bb;
}
.find button {
    display: flex;
    align-items: center;
    justify-content: center;
    width: 46px;
    border: 1px solid #c9cbcc;
    background-color: #fcfcfc;
}
.find svg {
    width: 28px;
    height: 28px;
}
.find .find-more {
    width: 24px;
    background-color: #dcdee0;
}
.find-more .caret {
    border-top-color: #999;
}
.filter {
    width: 317px;
    height: 39px;
    padding: 0 27px 0 11px;
    border: 1px solid #cfd1d2;
    border-radius: 0;
    appearance: none;
    background: linear-gradient(to right, #cfd1d2, #cfd1d2) right 25px top / 1px 100% no-repeat,
        conic-gradient(from -45deg at 50% 100%, #999 90deg, transparent 0) right 7px center / 12px 6px no-repeat,
        #f8f8f8;
    color: #aaa;
    font: inherit;
    opacity: 1;
}

/* warning dialog */
.overlay {
    position: fixed;
    inset: 0;
    display: grid;
    place-items: center;
    padding-bottom: 2px;
}
.dialog {
    width: 843px;
    padding: 2px;
    border: 1px solid #9c9ea1;
    background-color: #edeff1;
}
.dlg-head {
    display: grid;
    grid-template-columns: 40px 1fr 40px;
    height: 49px;
    background-color: #dcdddf;
    text-align: center;
}
.dlg-head h2 {
    grid-column: 2;
    color: #3b3e40;
    font-size: 19px;
    font-weight: normal;
    line-height: 54px;
}
.dlg-close {
    padding: 0 0 0 8px;
}
.dlg-close svg {
    width: 16px;
    height: 16px;
}
.dlg-body {
    display: flex;
    align-items: center;
    gap: 21px;
    height: 109px;
    padding: 0 21px;
    border-bottom: 1px solid #c6c8ca;
}
.dlg-body svg {
    width: 46px;
    height: 42px;
}
.dlg-foot {
    display: flex;
    justify-content: flex-end;
    gap: 13px;
    padding: 16px 17px 18px;
}
.dlg-foot button {
    width: 178px;
    height: 42px;
    border: 1px solid #b4b6b8;
    background-color: #f9f9f9;
}
.dlg-foot .primary {
    border-color: #8bcdec;
    background-color: #9fdffe;
}
.cursor {
    position: fixed;
    left: 102px;
    top: 771px;
    width: 24px;
    height: 32px;
}
```
